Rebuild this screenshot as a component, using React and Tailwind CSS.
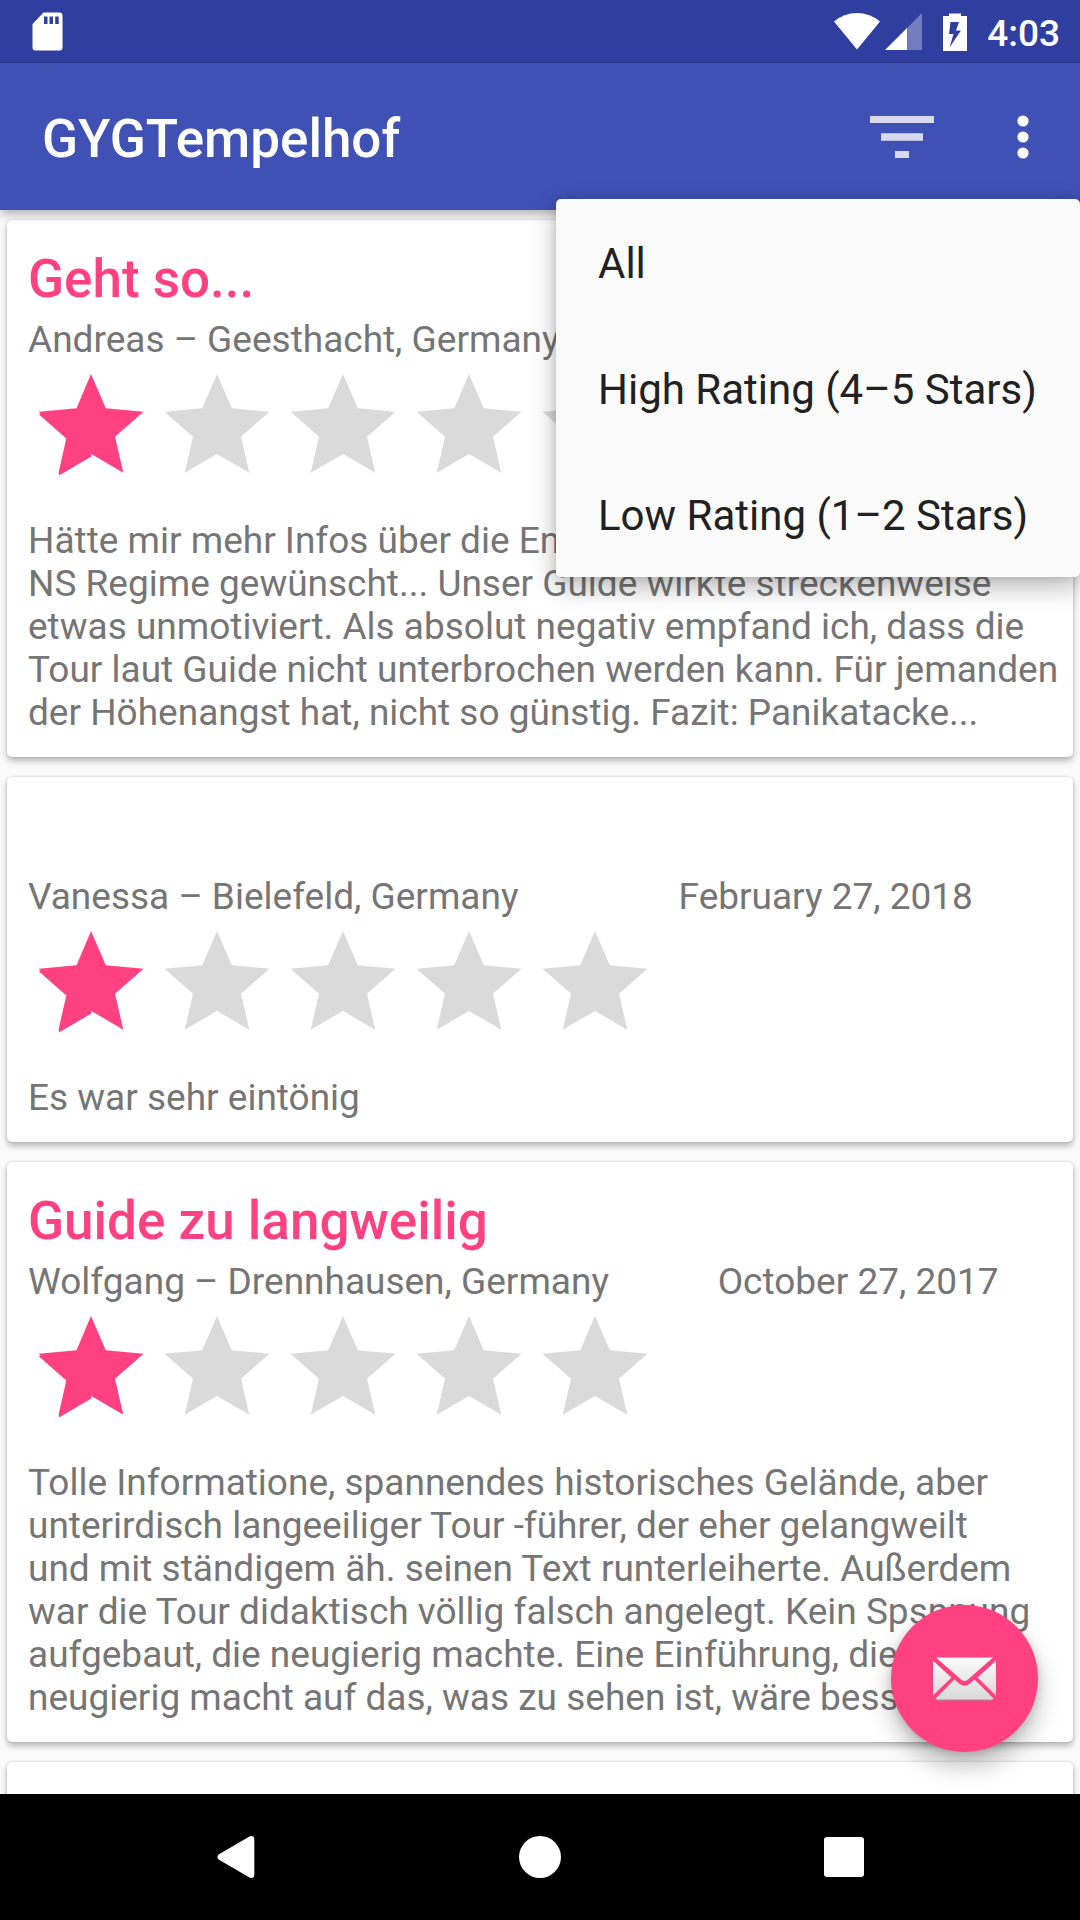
import React from "react";

const reviews = [
  {
    id: 1,
    title: "Geht so...",
    author: "Andreas – Geesthacht, Germany",
    date: "March 1, 2018",
    rating: 1,
    text: `Hätte mir mehr Infos über die Entstehung und das
NS Regime gewünscht... Unser Guide wirkte streckenweise
etwas unmotiviert. Als absolut negativ empfand ich, dass die
Tour laut Guide nicht unterbrochen werden kann. Für jemanden
der Höhenangst hat, nicht so günstig. Fazit: Panikatacke...`,
  },
  {
    id: 2,
    title: "",
    author: "Vanessa – Bielefeld, Germany",
    date: "February 27, 2018",
    rating: 1,
    text: "Es war sehr eintönig",
  },
  {
    id: 3,
    title: "Guide zu langweilig",
    author: "Wolfgang – Drennhausen, Germany",
    date: "October 27, 2017",
    rating: 1,
    text: `Tolle Informatione, spannendes historisches Gelände, aber
unterirdisch langeeiliger Tour -führer, der eher gelangweilt
und mit ständigem äh. seinen Text runterleiherte. Außerdem
war die Tour didaktisch völlig falsch angelegt. Kein Spsnnung
aufgebaut, die neugierig machte. Eine Einführung, die
neugierig macht auf das, was zu sehen ist, wäre besser.`,
  },
];

const filters = ["All", "High Rating (4–5 Stars)", "Low Rating (1–2 Stars)"];

function Star({ filled }) {
  return (
    <svg viewBox="0 0 126 126" className="size-[126px]" aria-hidden="true">
      {filled ? (
        <path
          fill="#ff4081"
          d="M63 13 L77.8 47.3 L115.5 50.7 L87 75.7 L95.3 111.7 L63.3 93 L63.3 95.5 L31 114.5 L30.7 111 L38.3 77.5 L11 53.5 L12.5 52.5 L10.7 50.7 L48.5 47.3 Z"
        />
      ) : (
        <path
          fill="#dadada"
          d="M63 13 L77.8 47.3 L115.5 50.7 L87 75.7 L95.3 111.7 L63 93 L30.7 111.7 L39 75.7 L10.5 50.7 L48.2 47.3 Z"
        />
      )}
    </svg>
  );
}

function ReviewCard({ review }) {
  return (
    <article className="shrink-0 rounded-[5px] bg-white pt-7 pr-2 pb-[23px] pl-[21px] shadow-[0_4px_6px_rgba(0,0,0,0.26),0_0_3px_rgba(0,0,0,0.16)]">
      <h2 className="min-h-[62px] text-[53px] leading-[62px] font-medium text-[#ff4081]">
        {review.title}
      </h2>
      <div className="mt-2 mr-3 flex leading-[43px]">
        <p className="grow-2">{review.author}</p>
        <p className="grow">{review.date}</p>
      </div>
      <div className="flex" role="img" aria-label={`${review.rating} / 5`}>
        {[1, 2, 3, 4, 5].map((n) => (
          <Star key={n} filled={n <= review.rating} />
        ))}
      </div>
      <p className="mt-8 leading-[43px] whitespace-pre-line">{review.text}</p>
    </article>
  );
}

function StatusBar() {
  return (
    <div className="flex h-[63px] shrink-0 items-center justify-between bg-[#303f9f] pr-5 pl-8 text-white">
      <svg viewBox="0 0 31 39" className="h-[39px] w-[31px]" aria-hidden="true">
        <path
          fill="#fff"
          fillRule="evenodd"
          d="M11.5 0.5 H27.5 Q30.5 0.5 30.5 3.5 V35.5 Q30.5 38.5 27.5 38.5 H3.5 Q0.5 38.5 0.5 35.5 V12 Z M12 4.5 V12 H15.5 V4.5 Z M17.5 4.5 V12 H21 V4.5 Z M23.2 4.5 V12 H26.7 V4.5 Z"
        />
      </svg>
      <div className="flex items-center">
        <svg viewBox="0 0 46 37" className="h-[37px] w-[46px]" aria-hidden="true">
          <path fill="#fff" d="M0 8.5 Q10 0 23 0 Q36 0 46 8.5 L23 36.5 Z" />
        </svg>
        <svg viewBox="0 0 37 37" className="ml-[5px] h-[37px] w-[37px]" aria-hidden="true">
          <path fill="#fff" fillOpacity="0.32" d="M37 0 V37 H22 V15 Z" />
          <path fill="#fff" d="M22 15 V37 H0 Z" />
        </svg>
        <svg viewBox="0 0 24 38" className="ml-[21px] h-[38px] w-[24px]" aria-hidden="true">
          <path
            fill="#fff"
            fillRule="evenodd"
            d="M6 0.5 H18 V3 H24 V38 H0 V3 H6 Z M7.5 9 L6 21 H10.5 L6.5 34.5 L18 17.5 H13 L16 9 Z"
          />
        </svg>
        <span className="ml-5 pt-1 text-[37px] leading-[43px] font-medium">4:03</span>
      </div>
    </div>
  );
}

function FilterMenu() {
  return (
    <div
      role="menu"
      aria-label="Filter"
      className="absolute top-[199px] right-0 z-30 flex min-w-[524px] flex-col rounded-[5px] bg-[#fafafa] shadow-[0_10px_26px_rgba(0,0,0,0.28),0_0_10px_rgba(0,0,0,0.12)]"
    >
      {filters.map((label) => (
        <button
          key={label}
          type="button"
          role="menuitem"
          className="h-[126px] pt-1 pr-10 pl-[42px] text-left text-[42px] leading-[50px] whitespace-nowrap text-[#212121]"
        >
          {label}
        </button>
      ))}
    </div>
  );
}

function NavBar() {
  return (
    <nav className="z-20 flex h-[126px] shrink-0 items-center justify-center gap-[178px] bg-black">
      <button type="button" aria-label="Back" className="grid size-[126px] place-items-center">
        <svg viewBox="0 0 126 126" className="size-[126px]" aria-hidden="true">
          <path
            fill="#fff"
            d="M46 60.2 L76.5 42.4 Q81 41 81.3 45 V81 Q81 85 76.5 83.6 L46 65.8 Q42.8 63 46 60.2 Z"
          />
        </svg>
      </button>
      <button type="button" aria-label="Home" className="grid size-[126px] place-items-center">
        <span className="size-[42px] rounded-full bg-white" />
      </button>
      <button type="button" aria-label="Recent apps" className="grid size-[126px] place-items-center">
        <span className="size-10 rounded-[3px] bg-white" />
      </button>
    </nav>
  );
}

export default function App() {
  return (
    <div className="relative flex h-screen flex-col overflow-hidden bg-[#fafafa] font-[Roboto,sans-serif] text-[37px] text-[#757575]">
      <StatusBar />
      <header className="z-10 flex h-[147px] shrink-0 items-center bg-[#3f51b5] pl-[42px] text-white shadow-[0_4px_10px_rgba(0,0,0,0.3)]">
        <h1 className="grow pt-1 text-[53px] leading-[62px] font-medium">GYGTempelhof</h1>
        <button type="button" aria-label="Filter" className="grid h-[126px] w-[126px] place-items-center">
          <svg viewBox="0 0 64 42" className="h-[42px] w-[64px]" aria-hidden="true">
            <path fill="#d9daf0" d="M0 0 H64 V7 H0 Z M11 17.3 H53 V24.7 H11 Z M25 35 H39 V42 H25 Z" />
          </svg>
        </button>
        <button type="button" aria-label="More options" className="grid h-[126px] w-[115px] place-items-center">
          <svg viewBox="0 0 12 44" className="h-[44px] w-[12px]" aria-hidden="true">
            <circle cx="6" cy="6" r="5.6" fill="#fff" />
            <circle cx="6" cy="22" r="5.6" fill="#fff" />
            <circle cx="6" cy="38" r="5.6" fill="#fff" />
          </svg>
        </button>
      </header>

      <main className="relative min-h-0 grow">
        <div className="flex h-full flex-col gap-5 overflow-hidden px-[7px] pt-2.5">
          {reviews.map((review) => (
            <ReviewCard key={review.id} review={review} />
          ))}
          <div className="h-[365px] shrink-0 rounded-[5px] bg-white shadow-[0_4px_6px_rgba(0,0,0,0.26),0_0_3px_rgba(0,0,0,0.16)]" />
        </div>
        <button
          type="button"
          aria-label="Send mail"
          className="absolute right-[42px] bottom-[42px] grid size-[147px] place-items-center rounded-full bg-[#ff4081] shadow-[0_14px_24px_rgba(0,0,0,0.26),0_2px_8px_rgba(0,0,0,0.14)]"
        >
          <svg viewBox="0 0 63 44" className="h-[44px] w-[63px]" aria-hidden="true">
            <defs>
              <linearGradient id="paper" x1="0" y1="0" x2="0" y2="44" gradientUnits="userSpaceOnUse">
                <stop offset="0" stopColor="#fcfcfc" />
                <stop offset="1" stopColor="#d8d8d8" />
              </linearGradient>
            </defs>
            <g fill="url(#paper)">
              <path d="M3 0.5 H60 L35.5 22 Q31.5 26 27.5 22 Z" />
              <path d="M0 3.8 L18.5 20.4 L0 38.5 Z" />
              <path d="M63 3.8 L44.5 20.4 L63 38.5 Z" />
              <path d="M21.5 22.5 L26.5 26.8 Q31.5 30.6 36.5 26.8 L41.5 22.5 L60.5 41.5 L58.5 43 H4.5 L2.5 41.5 Z" />
            </g>
            <path d="M4.5 43 H58.5" stroke="#a88c98" strokeWidth="1" />
          </svg>
        </button>
      </main>

      <NavBar />
      <FilterMenu />
    </div>
  );
}
